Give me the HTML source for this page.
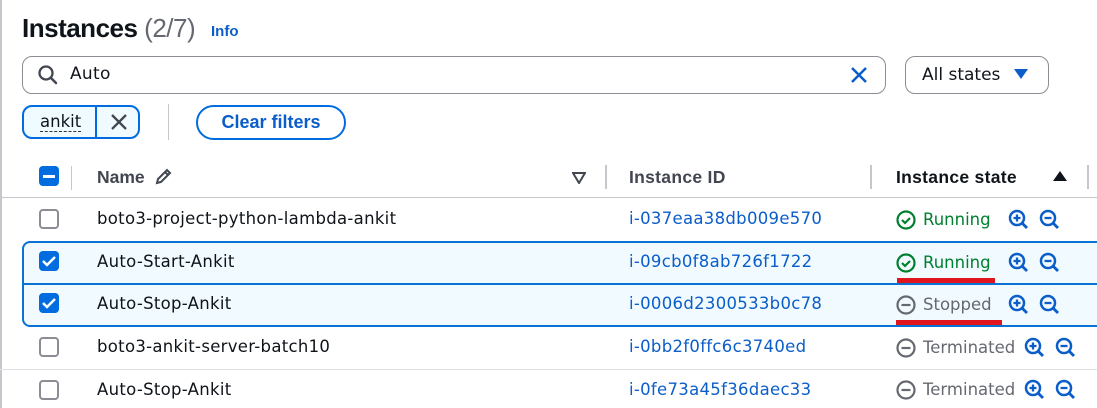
<!DOCTYPE html><html><head><style>
*{margin:0;padding:0;box-sizing:border-box}
body{width:1097px;height:408px;overflow:hidden;background:#fff;font-family:"Liberation Sans",sans-serif;position:relative;color:#0f141a}
.a{position:absolute;white-space:nowrap}
.cb{position:absolute;width:20px;height:20px;border:2px solid #8c8c94;border-radius:4px;left:39px;background:#fff}
.cbs{border:none;background:#006ce0}
.t,.id,.st{font-family:"DejaVu Sans","Liberation Sans",sans-serif;font-size:16.5px;letter-spacing:0.3px}
.t{color:#0f141a}
.id{color:#0b5ec9;left:629px}
.st{left:923px;letter-spacing:0}
.row{position:absolute;left:0;width:1097px;border-top:1px solid #dde0e5}
</style></head><body>
<div class="a" style="left:0;top:0;width:2px;height:408px;background:#c6c6cd"></div>
<div class="a" style="left:22px;top:13px;font-size:26px;font-weight:bold;letter-spacing:-0.5px">Instances <span style="font-weight:normal;color:#656871">(2/7)</span></div>
<div class="a" style="left:211px;top:23px;font-size:15px;font-weight:bold;color:#0b5ec9">Info</div>
<div class="a" style="left:22px;top:56px;width:864px;height:38px;border:1px solid #8c8c94;border-radius:10px"></div>
<svg class="a" style="left:37px;top:64px" width="22" height="22" viewBox="0 0 22 22"><circle cx="9" cy="9" r="6.5" fill="none" stroke="#424650" stroke-width="2.3"/><path d="M14 14l5 5" stroke="#424650" stroke-width="2.5" stroke-linecap="round"/></svg>
<div class="a t" style="left:70px;top:64px;font-size:17px">Auto</div>
<svg class="a" style="left:849px;top:65px" width="20" height="20"><path d="M3 3l14 14M17 3L3 17" stroke="#0b5ec9" stroke-width="2.5"/></svg>
<div class="a" style="left:905px;top:56px;width:144px;height:38px;border:1px solid #8c8c94;border-radius:10px"></div>
<div class="a t" style="left:922px;top:65px;font-size:17px;letter-spacing:0">All states</div>
<svg class="a" style="left:1013px;top:68px" width="16" height="12"><path d="M1 1h14L8 11z" fill="#0b5ec9"/></svg>
<div class="a" style="left:22px;top:105px;width:118px;height:34px;border:2px solid #006ce0;border-radius:10px;background:#f0fbff"></div>
<div class="a" style="left:95px;top:105px;width:2px;height:34px;background:#006ce0"></div>
<div class="a t" style="left:40px;top:112px;font-size:16.5px;border-bottom:1px dashed #333;line-height:19px;letter-spacing:0">ankit</div>
<svg class="a" style="left:109px;top:113px" width="20" height="18"><path d="M3 2l14 14M17 2L3 16" stroke="#424650" stroke-width="2.3"/></svg>
<div class="a" style="left:168px;top:104px;width:1px;height:36px;background:#c6c6cd"></div>
<div class="a" style="left:196px;top:105px;width:150px;height:35px;border:2px solid #006ce0;border-radius:18px;text-align:center;font-size:18px;font-weight:bold;color:#0b5ec9;line-height:31px">Clear filters</div>
<div class="cb cbs" style="top:166px"><div style="position:absolute;left:4px;top:9px;width:12px;height:2.5px;background:#fff"></div></div>
<div class="a" style="left:71px;top:166px;width:1px;height:24px;background:#c6c6cd"></div>
<div class="a" style="left:97px;top:167px;font-size:17.5px;font-weight:bold;color:#424650">Name</div>
<svg class="a" style="left:153px;top:167px" width="20" height="20"><path d="M4 16l1-4 9-9 3 3-9 9z M12 5l3 3" fill="none" stroke="#424650" stroke-width="2"/></svg>
<svg class="a" style="left:572px;top:172px" width="14" height="12"><path d="M1 1h12L7 11z" fill="none" stroke="#424650" stroke-width="2"/></svg>
<div class="a" style="left:605px;top:165px;width:2px;height:24px;background:#c6c6cd"></div>
<div class="a" style="left:629px;top:167px;font-size:17.5px;font-weight:bold;color:#424650;letter-spacing:0.3px">Instance ID</div>
<div class="a" style="left:870px;top:165px;width:2px;height:24px;background:#c6c6cd"></div>
<div class="a" style="left:896px;top:167px;font-size:17.5px;font-weight:bold;letter-spacing:0.3px">Instance state</div>
<svg class="a" style="left:1052px;top:170px" width="16" height="12"><path d="M1 11h14L8 1z" fill="#0f141a"/></svg>
<div class="a" style="left:1087px;top:165px;width:2px;height:24px;background:#c6c6cd"></div>
<div class="row" style="top:197px;border-color:#c6c6cd"></div>
<div class="row" style="top:369px"></div>
<div class="a" style="left:22px;top:241px;width:1080px;height:86px;background:#f1faff;border:2px solid #0972d3;border-radius:8px 0 0 8px"></div>
<div class="a" style="left:22px;top:283px;width:1080px;height:2px;background:#0972d3"></div>

<div class="cb" style="top:209px"></div>
<div class="a t" style="left:97px;top:209px">boto3-project-python-lambda-ankit</div>
<div class="a id" style="top:209px">i-037eaa38db009e570</div>
<div class="cb cbs" style="top:251px"><svg width="20" height="20"><path d="M4 10l4 4 8-8" fill="none" stroke="#fff" stroke-width="2.5"/></svg></div>
<div class="a t" style="left:97px;top:252px">Auto-Start-Ankit</div>
<div class="a id" style="top:252px">i-09cb0f8ab726f1722</div>
<div class="cb cbs" style="top:293px"><svg width="20" height="20"><path d="M4 10l4 4 8-8" fill="none" stroke="#fff" stroke-width="2.5"/></svg></div>
<div class="a t" style="left:97px;top:294px">Auto-Stop-Ankit</div>
<div class="a id" style="top:294px">i-0006d2300533b0c78</div>
<div class="cb" style="top:337px"></div>
<div class="a t" style="left:97px;top:337px">boto3-ankit-server-batch10</div>
<div class="a id" style="top:337px">i-0bb2f0ffc6c3740ed</div>
<div class="cb" style="top:380px"></div>
<div class="a t" style="left:97px;top:380px">Auto-Stop-Ankit</div>
<div class="a id" style="top:380px">i-0fe73a45f36daec33</div>

<svg class="a" style="left:0;top:0" width="1097" height="408">
<defs>
<g id="ok"><circle cx="0" cy="0" r="8.5" fill="none" stroke="#00802f" stroke-width="2.2"/><path d="M-4 0l3 3 5-5" fill="none" stroke="#00802f" stroke-width="2.2"/></g>
<g id="no"><circle cx="0" cy="0" r="8.5" fill="none" stroke="#656871" stroke-width="2.2"/><path d="M-4.5 0h9" stroke="#656871" stroke-width="2.2"/></g>
<g id="zi"><circle cx="-1" cy="-1" r="7" fill="none" stroke="#0b5ec9" stroke-width="2.5"/><path d="M4 4l5 5" stroke="#0b5ec9" stroke-width="2.8"/><path d="M-4.5 -1h7M-1 -4.5v7" stroke="#0b5ec9" stroke-width="2.3"/></g>
<g id="zo"><circle cx="-1" cy="-1" r="7" fill="none" stroke="#0b5ec9" stroke-width="2.5"/><path d="M4 4l5 5" stroke="#0b5ec9" stroke-width="2.8"/><path d="M-4.5 -1h7" stroke="#0b5ec9" stroke-width="2.3"/></g>
</defs>
<use href="#ok" x="906" y="220"/><use href="#ok" x="906" y="263"/>
<use href="#no" x="906" y="305"/><use href="#no" x="906" y="348"/><use href="#no" x="906" y="390"/>
<use href="#zi" x="1018" y="219"/><use href="#zo" x="1049" y="219"/>
<use href="#zi" x="1018" y="262"/><use href="#zo" x="1049" y="262"/>
<use href="#zi" x="1018" y="304"/><use href="#zo" x="1049" y="304"/>
<use href="#zi" x="1034" y="347"/><use href="#zo" x="1065" y="347"/>
<use href="#zi" x="1034" y="389"/><use href="#zo" x="1065" y="389"/>
<rect x="897" y="278" width="98" height="5" fill="#e0161e"/>
<rect x="896" y="320" width="106" height="5" fill="#e0161e"/>
</svg>
<div class="a st" style="top:210px;color:#00802f">Running</div>
<div class="a st" style="top:253px;color:#00802f">Running</div>
<div class="a st" style="top:295px;color:#656871">Stopped</div>
<div class="a st" style="top:338px;color:#656871">Terminated</div>
<div class="a st" style="top:380px;color:#656871">Terminated</div>
</body></html>
